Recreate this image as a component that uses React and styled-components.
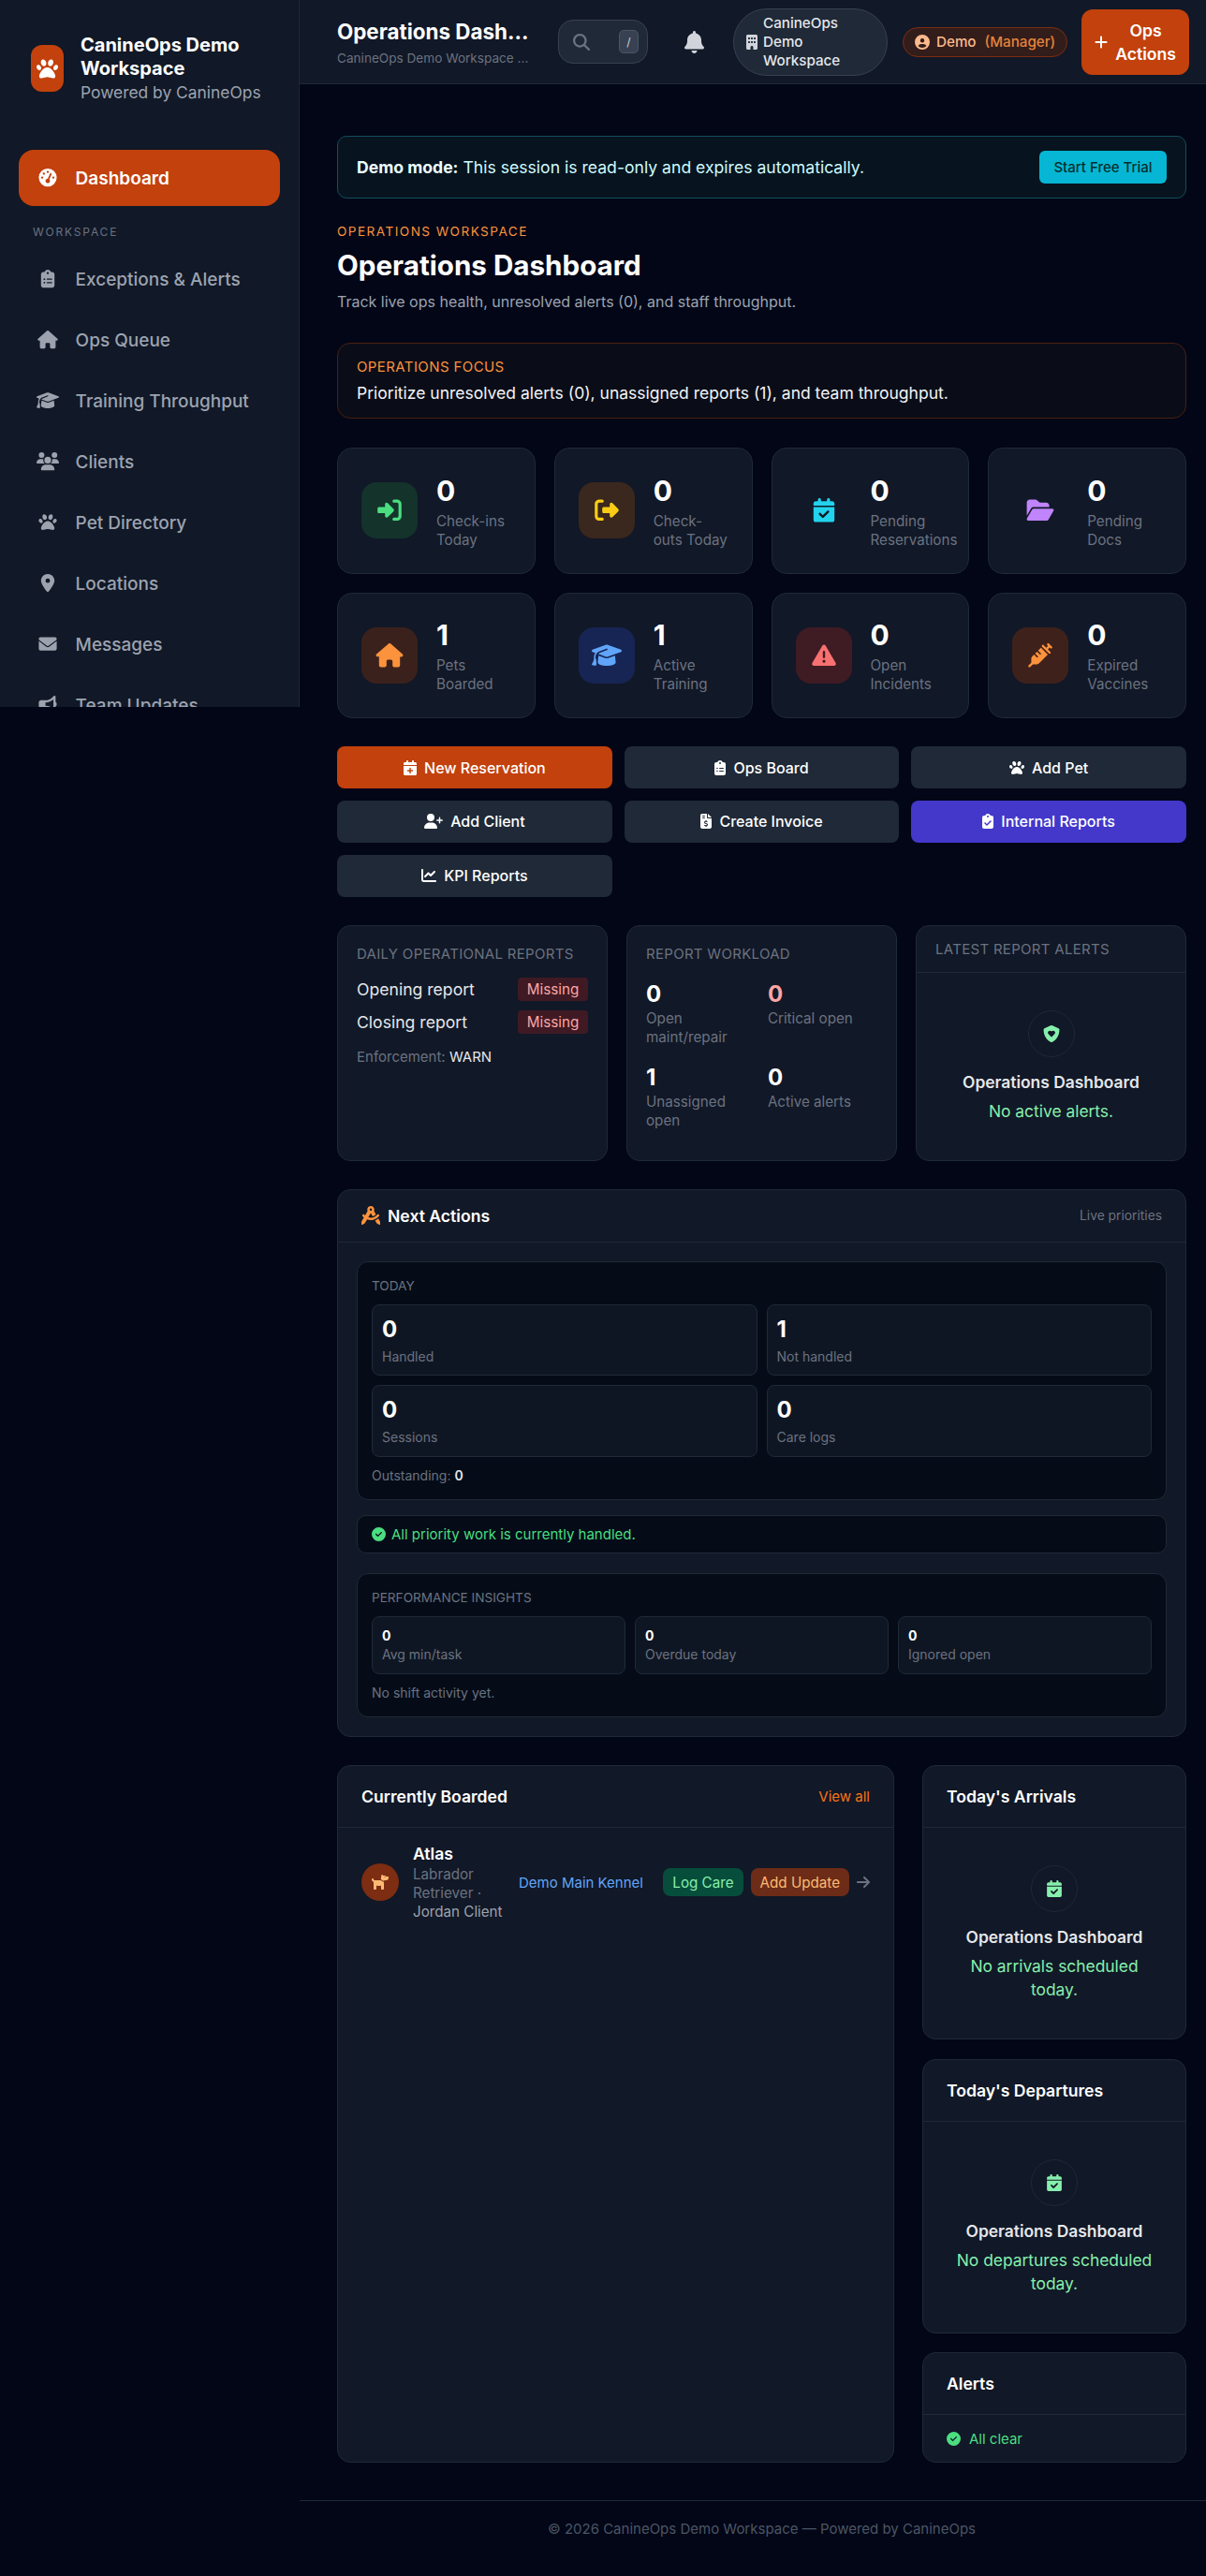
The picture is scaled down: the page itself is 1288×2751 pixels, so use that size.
import React from 'react';
import styled, { createGlobalStyle } from 'styled-components';
import {
	FaPaw, FaGaugeHigh, FaClipboardList, FaHouse, FaGraduationCap, FaUsers, FaLocationDot,
	FaEnvelope, FaBullhorn, FaMagnifyingGlass, FaBell, FaBuilding, FaCircleUser, FaPlus, FaRightToBracket,
	FaRightFromBracket, FaCalendarCheck, FaFolderOpen, FaTriangleExclamation, FaSyringe, FaCalendarPlus,
	FaUserPlus, FaFileInvoiceDollar, FaClipboardCheck, FaChartLine, FaCompassDrafting, FaCircleCheck,
	FaDog, FaArrowRight, FaShieldHeart,
} from 'react-icons/fa6';

const GlobalStyle = createGlobalStyle`
	html, body {
		margin: 0;
		background: #020617;
		font-family: Inter, "Noto Sans", sans-serif;
		color: #e5e7eb;
	}
	* {
		box-sizing: border-box;
	}
`;

const navItems = [
	{ label: 'Exceptions & Alerts', icon: FaClipboardList },
	{ label: 'Ops Queue', icon: FaHouse },
	{ label: 'Training Throughput', icon: FaGraduationCap },
	{ label: 'Clients', icon: FaUsers },
	{ label: 'Pet Directory', icon: FaPaw },
	{ label: 'Locations', icon: FaLocationDot },
	{ label: 'Messages', icon: FaEnvelope },
	{ label: 'Team Updates', icon: FaBullhorn },
];

const stats = [
	{ value: 0, label: 'Check-ins Today', icon: FaRightToBracket, color: '#4ade80', bg: '#14332b' },
	{ value: 0, label: 'Check-outs Today', icon: FaRightFromBracket, color: '#facc15', bg: '#3a271e' },
	{ value: 0, label: 'Pending Reservations', icon: FaCalendarCheck, color: '#22d3ee', bg: 'transparent' },
	{ value: 0, label: 'Pending Docs', icon: FaFolderOpen, color: '#c084fc', bg: 'transparent' },
	{ value: 1, label: 'Pets Boarded', icon: FaHouse, color: '#fb923c', bg: '#3b211c' },
	{ value: 1, label: 'Active Training', icon: FaGraduationCap, color: '#60a5fa', bg: '#172554' },
	{ value: 0, label: 'Open Incidents', icon: FaTriangleExclamation, color: '#f87171', bg: '#3f1b24' },
	{ value: 0, label: 'Expired Vaccines', icon: FaSyringe, color: '#fb923c', bg: '#3f211c' },
];

const actions = [
	{ label: 'New Reservation', icon: FaCalendarPlus, bg: '#c2410c', iconWidth: 14 },
	{ label: 'Ops Board', icon: FaClipboardList, bg: '#1f2937', iconWidth: 12 },
	{ label: 'Add Pet', icon: FaPaw, bg: '#1f2937', iconWidth: 16 },
	{ label: 'Add Client', icon: FaUserPlus, bg: '#1f2937', iconWidth: 20 },
	{ label: 'Create Invoice', icon: FaFileInvoiceDollar, bg: '#1f2937', iconWidth: 12 },
	{ label: 'Internal Reports', icon: FaClipboardCheck, bg: '#4338ca', iconWidth: 12 },
	{ label: 'KPI Reports', icon: FaChartLine, bg: '#1f2937', iconWidth: 16 },
];

export default function App() {
	return (
		<Shell>
			<GlobalStyle />
			<Sidebar>
				<Brand>
					<BrandMark><FaPaw /></BrandMark>
					<div>
						<BrandName>CanineOps Demo Workspace</BrandName>
						<BrandSub>Powered by CanineOps</BrandSub>
					</div>
				</Brand>
				<Nav>
					<NavItem $active>
						<NavIcon><FaGaugeHigh /></NavIcon>
						Dashboard
					</NavItem>
					<NavHeading>WORKSPACE</NavHeading>
					{navItems.map((item) => (
						<NavItem key={item.label}>
							<NavIcon><item.icon /></NavIcon>
							{item.label}
						</NavItem>
					))}
				</Nav>
			</Sidebar>

			<Main>
				<TopBar>
					<TitleBlock>
						<TopTitle>Operations Dash...</TopTitle>
						<TopSub>CanineOps Demo Workspace ...</TopSub>
					</TitleBlock>
					<SearchBox>
						<FaMagnifyingGlass />
						<Kbd>/</Kbd>
					</SearchBox>
					<BellButton><FaBell /></BellButton>
					<WorkspacePill>
						<FaBuilding />
						<span>CanineOps Demo Workspace</span>
					</WorkspacePill>
					<RolePill>
						<FaCircleUser />
						<span>Demo</span>
						<RoleName>(Manager)</RoleName>
					</RolePill>
					<OpsButton>
						<FaPlus />
						<span>Ops Actions</span>
					</OpsButton>
				</TopBar>

				<Content>
					<DemoBanner>
						<span><b>Demo mode:</b> This session is read-only and expires automatically.</span>
						<TrialButton>Start Free Trial</TrialButton>
					</DemoBanner>

					<Eyebrow>OPERATIONS WORKSPACE</Eyebrow>
					<PageTitle>Operations Dashboard</PageTitle>
					<PageSub>Track live ops health, unresolved alerts (0), and staff throughput.</PageSub>

					<FocusBox>
						<FocusLabel>OPERATIONS FOCUS</FocusLabel>
						<FocusText>Prioritize unresolved alerts (0), unassigned reports (1), and team throughput.</FocusText>
					</FocusBox>

					<StatGrid>
						{stats.map((stat) => (
							<StatCard key={stat.label}>
								<StatIcon $bg={stat.bg} $color={stat.color}><stat.icon /></StatIcon>
								<StatText>
									<StatValue>{stat.value}</StatValue>
									<StatLabel>{stat.label}</StatLabel>
								</StatText>
							</StatCard>
						))}
					</StatGrid>

					<ActionGrid>
						{actions.map((action) => (
							<ActionButton key={action.label} $bg={action.bg} $iconWidth={action.iconWidth}>
								<action.icon />
								{action.label}
							</ActionButton>
						))}
					</ActionGrid>

					<ReportGrid>
						<Panel>
							<ReportBody>
								<ReportTitle>DAILY OPERATIONAL REPORTS</ReportTitle>
								<ReportRow>
									Opening report
									<MissingBadge>Missing</MissingBadge>
								</ReportRow>
								<ReportRow>
									Closing report
									<MissingBadge>Missing</MissingBadge>
								</ReportRow>
								<Enforcement>Enforcement: <b>WARN</b></Enforcement>
							</ReportBody>
						</Panel>
						<Panel>
							<ReportBody>
								<ReportTitle>REPORT WORKLOAD</ReportTitle>
								<WorkloadGrid>
									<div><WorkloadValue>0</WorkloadValue><StatLabel>Open maint/repair</StatLabel></div>
									<div><WorkloadValue $danger>0</WorkloadValue><StatLabel>Critical open</StatLabel></div>
									<div><WorkloadValue>1</WorkloadValue><StatLabel>Unassigned open</StatLabel></div>
									<div><WorkloadValue>0</WorkloadValue><StatLabel>Active alerts</StatLabel></div>
								</WorkloadGrid>
							</ReportBody>
						</Panel>
						<Panel>
							<AlertHead>LATEST REPORT ALERTS</AlertHead>
							<EmptyState>
								<EmptyCircle><FaShieldHeart /></EmptyCircle>
								<EmptyTitle>Operations Dashboard</EmptyTitle>
								<EmptyText>No active alerts.</EmptyText>
							</EmptyState>
						</Panel>
					</ReportGrid>

					<NextPanel>
						<NextHead>
							<NextTitle><FaCompassDrafting />Next Actions</NextTitle>
							<LivePriorities>Live priorities</LivePriorities>
						</NextHead>
						<NextBody>
							<InnerBox>
								<InnerLabel>TODAY</InnerLabel>
								<TodayGrid>
									<Metric><MetricValue>0</MetricValue><MetricLabel>Handled</MetricLabel></Metric>
									<Metric><MetricValue>1</MetricValue><MetricLabel>Not handled</MetricLabel></Metric>
									<Metric><MetricValue>0</MetricValue><MetricLabel>Sessions</MetricLabel></Metric>
									<Metric><MetricValue>0</MetricValue><MetricLabel>Care logs</MetricLabel></Metric>
								</TodayGrid>
								<InnerNote>Outstanding: <b>0</b></InnerNote>
							</InnerBox>
							<HandledBox><FaCircleCheck />All priority work is currently handled.</HandledBox>
							<InsightsBox>
								<InnerLabel>PERFORMANCE INSIGHTS</InnerLabel>
								<InsightGrid>
									<InsightCell><InsightValue>0</InsightValue><MetricLabel>Avg min/task</MetricLabel></InsightCell>
									<InsightCell><InsightValue>0</InsightValue><MetricLabel>Overdue today</MetricLabel></InsightCell>
									<InsightCell><InsightValue>0</InsightValue><MetricLabel>Ignored open</MetricLabel></InsightCell>
								</InsightGrid>
								<InnerNote>No shift activity yet.</InnerNote>
							</InsightsBox>
						</NextBody>
					</NextPanel>

					<BottomGrid>
						<Panel>
							<CardHead>
								<CardTitle>Currently Boarded</CardTitle>
								<ViewAll>View all</ViewAll>
							</CardHead>
							<PetRow>
								<Avatar><FaDog /></Avatar>
								<PetInfo>
									<PetName>Atlas</PetName>
									<PetMeta>Labrador Retriever · <em>Jordan Client</em></PetMeta>
								</PetInfo>
								<Kennel>Demo Main Kennel</Kennel>
								<RowActions>
									<Chip $bg="#064e3b" $color="#86efac">Log Care</Chip>
									<Chip $bg="#6c2c17" $color="#fdba74">Add Update</Chip>
									<RowArrow><FaArrowRight /></RowArrow>
								</RowActions>
							</PetRow>
						</Panel>
						<SideColumn>
							<Panel>
								<CardHead><CardTitle>Today's Arrivals</CardTitle></CardHead>
								<EmptyState>
									<EmptyCircle><FaCalendarCheck /></EmptyCircle>
									<EmptyTitle>Operations Dashboard</EmptyTitle>
									<EmptyText>No arrivals scheduled today.</EmptyText>
								</EmptyState>
							</Panel>
							<Panel>
								<CardHead><CardTitle>Today's Departures</CardTitle></CardHead>
								<EmptyState>
									<EmptyCircle><FaCalendarCheck /></EmptyCircle>
									<EmptyTitle>Operations Dashboard</EmptyTitle>
									<EmptyText>No departures scheduled today.</EmptyText>
								</EmptyState>
							</Panel>
							<Panel>
								<CardHead><CardTitle>Alerts</CardTitle></CardHead>
								<AllClear><FaCircleCheck />All clear</AllClear>
							</Panel>
						</SideColumn>
					</BottomGrid>
				</Content>

				<Footer>© 2026 CanineOps Demo Workspace — Powered by CanineOps</Footer>
			</Main>
		</Shell>
	);
}

const Shell = styled.div`
	display: flex;
	align-items: flex-start;
	min-height: 2751px;
	background: #020617;
`;

const Sidebar = styled.aside`
	flex: 0 0 320px;
	height: 755px;
	overflow: hidden;
	background: #111827;
	border-right: 1px solid #1f2937;
`;

const Brand = styled.div`
	display: flex;
	align-items: center;
	gap: 18px;
	height: 146px;
	padding: 0 20px 0 33px;
`;

const BrandMark = styled.div`
	flex: 0 0 35px;
	height: 50px;
	display: flex;
	align-items: center;
	justify-content: center;
	background: #c2410c;
	border-radius: 12px;
	color: #fff;

	svg {
		height: 23px;
		width: 23px;
	}
`;

const BrandName = styled.div`
	font-size: 20px;
	font-weight: 700;
	line-height: 25px;
	color: #fff;
`;

const BrandSub = styled.div`
	font-size: 17.4px;
	line-height: 25px;
	color: #9ca3af;
`;

const Nav = styled.nav`
	display: flex;
	flex-direction: column;
	padding: 14px 20px 0;
`;

const NavItem = styled.div`
	flex: 0 0 60px;
	display: flex;
	align-items: center;
	gap: 17.6px;
	padding: 0 18px;
	margin-bottom: 5px;
	border-radius: 16px;
	font-size: 19px;
	font-weight: ${(p) => (p.$active ? 600 : 500)};
	color: ${(p) => (p.$active ? '#fff' : '#9ca3af')};
	background: ${(p) => (p.$active ? '#c2410c' : 'transparent')};
`;

const NavIcon = styled.span`
	flex: 0 0 25px;
	display: flex;
	justify-content: center;

	svg {
		height: 19.2px;
		width: 24px;
	}
`;

const NavHeading = styled.div`
	height: 22px;
	margin: 12px 0 9px;
	padding-left: 15px;
	font-size: 12px;
	line-height: 22px;
	letter-spacing: 1.8px;
	color: #6b7280;
`;

const Main = styled.main`
	flex: 1;
	min-width: 0;
`;

const TopBar = styled.header`
	display: flex;
	align-items: center;
	gap: 15px;
	height: 90px;
	padding: 0 21px 0 40px;
	background: #111827;
	border-bottom: 1px solid #1f2937;
`;

const TitleBlock = styled.div`
	flex: 0 0 206px;
	margin-right: 15px;
	white-space: nowrap;
`;

const TopTitle = styled.div`
	font-size: 22.4px;
	font-weight: 700;
	line-height: 32px;
	color: #fff;
`;

const TopSub = styled.div`
	margin-top: 2px;
	font-size: 13.6px;
	line-height: 20px;
	color: #6b7280;
`;

const SearchBox = styled.div`
	flex: 0 0 96px;
	height: 47px;
	display: flex;
	align-items: center;
	justify-content: space-between;
	padding: 0 9px 0 15px;
	background: #1f2937;
	border: 1px solid #374151;
	border-radius: 16px;
	color: #6b7280;

	> svg {
		height: 18px;
		width: 18px;
	}
`;

const Kbd = styled.span`
	width: 21px;
	height: 25px;
	display: flex;
	align-items: center;
	justify-content: center;
	background: #374151;
	border: 1px solid #4b5563;
	border-radius: 5px;
	font-size: 12px;
	color: #d1d5db;
`;

const BellButton = styled.div`
	flex: 0 0 42px;
	margin: 0 6px 0 13px;
	display: flex;
	justify-content: center;
	color: #d1d5db;

	svg {
		height: 24px;
		width: 21px;
	}
`;

const WorkspacePill = styled.div`
	flex: 0 0 165px;
	height: 72px;
	display: flex;
	align-items: center;
	gap: 6px;
	padding: 0 20px 0 13px;
	background: #1f2937;
	border: 1px solid #374151;
	border-radius: 36px;
	font-size: 15.2px;
	font-weight: 500;
	line-height: 20px;
	color: #e5e7eb;

	svg {
		flex: none;
		height: 16px;
		width: 12px;
		color: #d1d5db;
	}
`;

const RolePill = styled.div`
	flex: 0 0 174px;
	height: 32px;
	margin-left: 1px;
	display: flex;
	align-items: center;
	gap: 7px;
	padding: 0 12px;
	background: #331d1a;
	border: 1px solid #7c2d12;
	border-radius: 16px;
	font-size: 15.2px;
	font-weight: 500;
	color: #fdba8c;
	white-space: nowrap;

	svg {
		height: 16px;
		width: 16px;
		color: #fdba8c;
	}
`;

const RoleName = styled.span`
	color: #e5843c;
	margin-left: 2px;
`;

const OpsButton = styled.div`
	flex: 0 0 114px;
	height: 70px;
	display: flex;
	align-items: center;
	gap: 8px;
	padding: 0 14px;
	background: #c2410c;
	border-radius: 12px;
	font-size: 17.6px;
	font-weight: 600;
	line-height: 25px;
	text-align: center;
	color: #fff;

	svg {
		flex: none;
		height: 16px;
		width: 14px;
	}
`;

const Content = styled.div`
	padding: 55px 21px 0 40px;
`;

const DemoBanner = styled.div`
	height: 67px;
	display: flex;
	align-items: center;
	justify-content: space-between;
	padding: 0 20px;
	background: #07141f;
	border: 1px solid #134e5e;
	border-radius: 10px;
	font-size: 17.6px;
	color: #cffafe;

	b {
		font-weight: 700;
		color: #ecfeff;
	}
`;

const TrialButton = styled.div`
	width: 136px;
	height: 35px;
	display: flex;
	align-items: center;
	justify-content: center;
	background: #06b6d4;
	border-radius: 6px;
	font-size: 15px;
	font-weight: 500;
	color: #042f2e;
`;

const Eyebrow = styled.div`
	margin-top: 25px;
	font-size: 13.6px;
	line-height: 20px;
	letter-spacing: 1.45px;
	color: #fb923c;
`;

const PageTitle = styled.h1`
	margin: 6px 0 0;
	font-size: 29.6px;
	font-weight: 700;
	line-height: 40px;
	color: #fff;
`;

const PageSub = styled.p`
	margin: 7px 0 0;
	font-size: 16px;
	line-height: 24px;
	color: #9ca3af;
`;

const FocusBox = styled.div`
	height: 81px;
	margin-top: 32px;
	padding: 15px 20px;
	background: #0a0d18;
	border: 1px solid #4a2010;
	border-radius: 14px;
`;

const FocusLabel = styled.div`
	font-size: 15px;
	line-height: 20px;
	letter-spacing: 0.4px;
	color: #fb923c;
`;

const FocusText = styled.div`
	margin-top: 6px;
	font-size: 17.5px;
	line-height: 24px;
	color: #f3f4f6;
`;

const StatGrid = styled.div`
	display: grid;
	grid-template-columns: repeat(4, minmax(0, 1fr));
	gap: 20px;
	margin-top: 31px;
`;

const StatCard = styled.div`
	height: 134.5px;
	display: flex;
	align-items: center;
	gap: 20px;
	padding: 0 25px;
	background: #111827;
	border: 1px solid #1f2937;
	border-radius: 16px;
`;

const StatIcon = styled.div`
	flex: 0 0 60px;
	height: 60px;
	display: flex;
	align-items: center;
	justify-content: center;
	border-radius: 16px;
	background: ${(p) => p.$bg};
	color: ${(p) => p.$color};

	svg {
		height: 25.6px;
		width: 32px;
	}
`;

const StatText = styled.div`
	flex: 1;
	min-width: 0;
`;

const StatValue = styled.div`
	font-size: 30px;
	font-weight: 700;
	line-height: 40px;
	margin-bottom: 3px;
	color: #fff;
`;

const StatLabel = styled.div`
	font-size: 15.2px;
	line-height: 20px;
	color: #6b7280;
`;

const ActionGrid = styled.div`
	display: grid;
	grid-template-columns: repeat(3, minmax(0, 1fr));
	gap: 12.8px;
	margin-top: 30px;
`;

const ActionButton = styled.div`
	height: 45px;
	display: flex;
	align-items: center;
	justify-content: center;
	gap: 8px;
	background: ${(p) => p.$bg};
	border-radius: 8px;
	font-size: 16px;
	font-weight: 500;
	color: #fff;

	svg {
		height: 16px;
		width: ${(p) => p.$iconWidth}px;
	}
`;

const ReportGrid = styled.div`
	display: grid;
	grid-template-columns: repeat(3, minmax(0, 1fr));
	gap: 20px;
	margin-top: 30px;
`;

const Panel = styled.section`
	background: #111827;
	border: 1px solid #1f2937;
	border-radius: 14px;
	min-width: 0;
`;

const ReportBody = styled.div`
	height: 250px;
	padding: 20px;
`;

const ReportTitle = styled.div`
	font-size: 15px;
	line-height: 20px;
	letter-spacing: 0.3px;
	color: #6b7280;
`;

const ReportRow = styled.div`
	display: flex;
	align-items: center;
	justify-content: space-between;
	height: 25px;
	margin-top: 10px;
	font-size: 17.6px;
	color: #e5e7eb;

	${ReportTitle} + & {
		margin-top: 15px;
	}
`;

const MissingBadge = styled.span`
	width: 75px;
	height: 25px;
	display: flex;
	align-items: center;
	justify-content: center;
	background: #3f1a24;
	border-radius: 4px;
	font-size: 15.2px;
	color: #fca5a5;
`;

const Enforcement = styled.div`
	margin-top: 15px;
	font-size: 15px;
	line-height: 20px;
	color: #6b7280;

	b {
		font-weight: 400;
		color: #e5e7eb;
	}
`;

const WorkloadGrid = styled.div`
	display: grid;
	grid-template-columns: repeat(2, minmax(0, 1fr));
	gap: 17px 12.8px;
	margin-top: 17px;
`;

const WorkloadValue = styled.div`
	font-size: 24px;
	font-weight: 700;
	line-height: 32px;
	color: ${(p) => (p.$danger ? '#fca5a5' : '#fff')};
`;

const AlertHead = styled.div`
	height: 50px;
	padding: 15px 20px;
	border-bottom: 1px solid #1f2937;
	font-size: 15px;
	line-height: 20px;
	letter-spacing: 0.3px;
	color: #6b7280;
`;

const EmptyState = styled.div`
	display: flex;
	flex-direction: column;
	align-items: center;
	padding: 40px 30px;
	text-align: center;
`;

const EmptyCircle = styled.div`
	width: 50px;
	height: 50px;
	display: flex;
	align-items: center;
	justify-content: center;
	border: 1px solid #1f2937;
	border-radius: 50%;
	color: #86efac;

	svg {
		height: 18px;
		width: 18px;
	}
`;

const EmptyTitle = styled.div`
	margin-top: 15px;
	font-size: 17.4px;
	font-weight: 600;
	line-height: 24px;
	color: #e5e7eb;
`;

const EmptyText = styled.div`
	margin-top: 6px;
	font-size: 17.4px;
	line-height: 25px;
	color: #86efac;
`;

const NextPanel = styled(Panel)`
	margin-top: 30px;
`;

const NextHead = styled.div`
	height: 56px;
	display: flex;
	align-items: center;
	justify-content: space-between;
	padding: 0 25px;
	border-bottom: 1px solid #1f2937;
`;

const NextTitle = styled.div`
	display: flex;
	align-items: center;
	gap: 8px;
	font-size: 17.6px;
	font-weight: 600;
	color: #fff;

	svg {
		height: 20px;
		width: 20px;
		color: #fb923c;
	}
`;

const LivePriorities = styled.div`
	font-size: 13.8px;
	color: #6b7280;
`;

const NextBody = styled.div`
	display: flex;
	flex-direction: column;
	gap: 16px;
	padding: 20px;
`;

const InnerBox = styled.div`
	padding: 15px;
	background: #050c18;
	border: 1px solid #1f2937;
	border-radius: 12px;
`;

const InsightsBox = styled(InnerBox)`
	margin-top: 5px;
`;

const InnerLabel = styled.div`
	font-size: 13.6px;
	line-height: 20px;
	color: #6b7280;
`;

const TodayGrid = styled.div`
	display: grid;
	grid-template-columns: repeat(2, minmax(0, 1fr));
	gap: 10px;
	margin-top: 10px;
`;

const Metric = styled.div`
	height: 76.5px;
	padding: 10px;
	background: #0f1623;
	border: 1px solid #1f2937;
	border-radius: 8px;
`;

const MetricValue = styled.div`
	font-size: 24px;
	font-weight: 700;
	line-height: 32px;
	margin-bottom: 3px;
	color: #fff;
`;

const MetricLabel = styled.div`
	font-size: 14px;
	line-height: 20px;
	color: #6b7280;
`;

const InnerNote = styled.div`
	margin-top: 10px;
	font-size: 14px;
	line-height: 20px;
	color: #6b7280;

	b {
		font-weight: 600;
		color: #e5e7eb;
	}
`;

const HandledBox = styled.div`
	height: 41px;
	display: flex;
	align-items: center;
	gap: 6px;
	padding: 0 15px;
	background: #050c18;
	border: 1px solid #1f2937;
	border-radius: 10px;
	font-size: 15px;
	color: #4ade80;

	svg {
		height: 15px;
		width: 15px;
	}
`;

const InsightGrid = styled.div`
	display: grid;
	grid-template-columns: repeat(3, minmax(0, 1fr));
	gap: 10px;
	margin-top: 10px;
`;

const InsightCell = styled.div`
	height: 62.5px;
	padding: 10px;
	background: #0f1623;
	border: 1px solid #1f2937;
	border-radius: 8px;
`;

const InsightValue = styled.div`
	font-size: 14px;
	font-weight: 700;
	line-height: 20px;
	color: #fff;
`;

const BottomGrid = styled.div`
	display: grid;
	grid-template-columns: minmax(0, 1fr) 282px;
	gap: 30px;
	margin-top: 30px;
`;

const SideColumn = styled.div`
	display: flex;
	flex-direction: column;
	gap: 20.5px;
`;

const CardHead = styled.div`
	height: 66px;
	display: flex;
	align-items: center;
	justify-content: space-between;
	padding: 0 25px;
	border-bottom: 1px solid #1f2937;
`;

const CardTitle = styled.div`
	font-size: 17.6px;
	font-weight: 600;
	color: #fff;
`;

const ViewAll = styled.div`
	font-size: 15px;
	color: #f97316;
`;

const PetRow = styled.div`
	display: flex;
	align-items: center;
	padding: 16px 25px;
`;

const Avatar = styled.div`
	flex: 0 0 40px;
	height: 40px;
	display: flex;
	align-items: center;
	justify-content: center;
	background: #7c2d12;
	border-radius: 50%;
	color: #fdba74;

	svg {
		height: 16px;
		width: 18px;
	}
`;

const PetInfo = styled.div`
	flex: 0 0 113px;
	margin-left: 15px;
`;

const PetName = styled.div`
	font-size: 17.6px;
	font-weight: 600;
	line-height: 24px;
	color: #fff;
`;

const PetMeta = styled.div`
	font-size: 15.2px;
	line-height: 20px;
	color: #6b7280;

	em {
		font-style: normal;
		color: #9ca3af;
	}
`;

const Kennel = styled.div`
	flex: 1;
	font-size: 15px;
	color: #60a5fa;
`;

const RowActions = styled.div`
	display: flex;
	align-items: center;
	gap: 8px;
`;

const Chip = styled.div`
	height: 30px;
	display: flex;
	align-items: center;
	padding: 0 10px;
	background: ${(p) => p.$bg};
	border-radius: 8px;
	font-size: 15.2px;
	color: ${(p) => p.$color};
`;

const RowArrow = styled.span`
	display: flex;
	color: #6b7280;

	svg {
		height: 16px;
		width: 14px;
	}
`;

const AllClear = styled.div`
	display: flex;
	align-items: center;
	gap: 9px;
	height: 50px;
	padding: 0 25px;
	font-size: 15px;
	color: #4ade80;

	svg {
		height: 15px;
		width: 15px;
	}
`;

const Footer = styled.footer`
	margin-top: 40px;
	padding: 20px 21px 20px 40px;
	border-top: 1px solid #1f2937;
	font-size: 15px;
	line-height: 20px;
	text-align: center;
	color: #4b5563;
`;
